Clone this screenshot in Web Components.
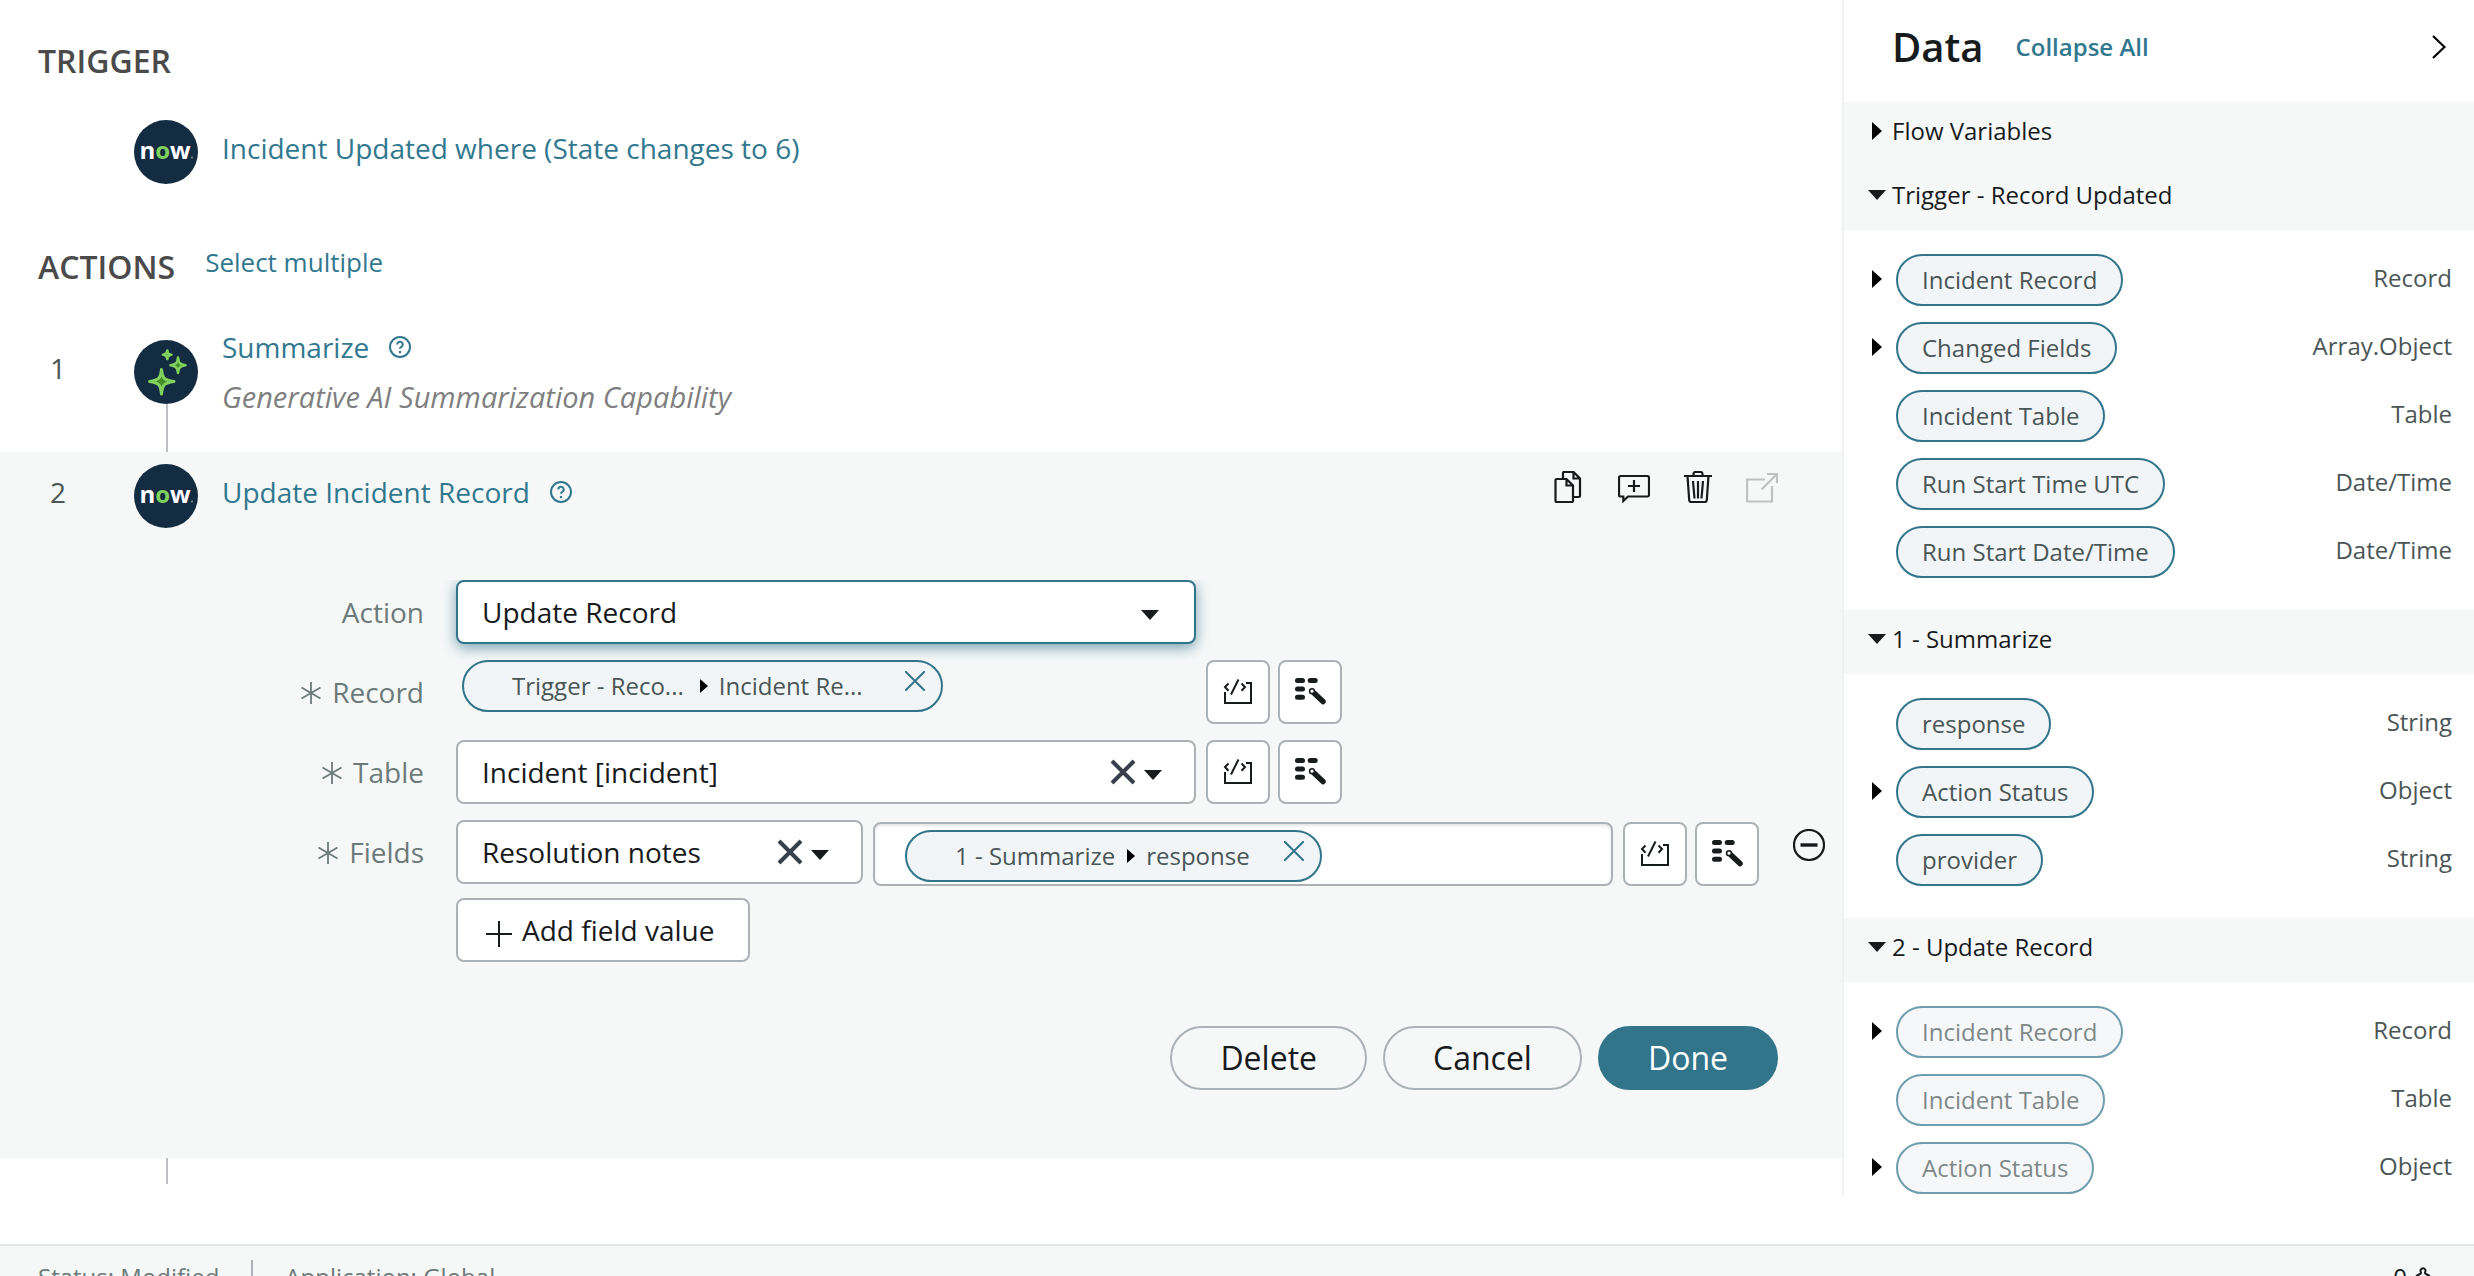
<!DOCTYPE html>
<html lang="en">
<head>
<meta charset="utf-8">
<title>Flow Designer</title>
<style>
  html { height: 100%; }
  body {
    margin: 0;
    height: 100%;
    overflow: hidden;
    background: #fff;
    color: #181b1c;
    font-family: "Open Sans", "Noto Sans", sans-serif;
    font-size: 28px;
    line-height: 38px;
    --teal: #32758b;
    --muted: #6d7a7a;
    --text-soft: #4a5656;
    --line: #abb2b5;
    --shade: #f6f8f8;
  }
</style>
</head>
<body>
<flow-designer></flow-designer>

<script>
  // Base class: opens the shadow root and fills it with styles + markup
  class FlowElement extends HTMLElement {
    connectedCallback() {
      if (this.shadowRoot) return;
      const template = document.createElement('template');
      template.innerHTML = `<style>
        *, *::before, *::after { box-sizing: border-box; }
        button { font: inherit; color: inherit; background: none; border: 0; padding: 0; margin: 0; cursor: pointer; }
        ${this.styles()}
      </style>${this.markup()}`;
      this.attachShadow({ mode: 'open' }).appendChild(template.content.cloneNode(true));
    }
  }

  // name: [width, height, viewBox, shapes]
  const icons = {
    help: [22, 22, '0 0 22 22', '<circle cx="11" cy="11" r="10" stroke-width="2"/><path d="M8.3 8.4a2.7 2.7 0 1 1 4 2.4c-.9.5-1.3.9-1.3 1.9" stroke-width="2"/><path d="M11 15v2.2" stroke-width="2.2"/>'],
    copy: [32, 32, '2 0 32 32', '<path d="M4.5 8H14.5L21 14.5V30a1 1 0 0 1-1 1H4.5a1 1 0 0 1-1-1V9a1 1 0 0 1 1-1zM14.5 8v6.5H21M11 8V2a1 1 0 0 1 1-1H21.5L28 7.5V25a1 1 0 0 1-1 1H22M21.5 1v6.5H28" stroke-width="2.2"/>'],
    comment: [32, 32, '0 0 32 32', '<path d="M2.5 5h27a1.5 1.5 0 0 1 1.5 1.5V24a1.5 1.5 0 0 1-1.5 1.5H10L5.3 30v-4.5H2.5A1.5 1.5 0 0 1 1 24V6.5A1.5 1.5 0 0 1 2.5 5zM16 9v12M10 15h12" stroke-width="2.2"/>'],
    trash: [32, 32, '0 0 32 32', '<path d="M2 5h28M11.5 5V3a2 2 0 0 1 2-2h5a2 2 0 0 1 2 2v2M5.500 5l1.700 24a2 2 0 0 0 2 2h13.6a2 2 0 0 0 2-2L26.5 5M11 10l1.5 17.5M16 10v17.5M21 10l-1.5 17.5" stroke-width="2.200"/>'],
    open: [32, 32, '0 0 32 32', '<path d="M19 8.5H1v22h25V15M21 3h10v9M31 3L15.5 18.5" stroke-width="2.2"/>'],
    code: [32, 32, '16 16 32 32', '<path d="M19 32v11h26V23h-5M25 34.5l7.5-15M22.5 23.5L19 27l3.5 3.8M35.5 23.5l3.5 3.5-3.5 3.8" stroke-width="2"/>'],
    wand: [32, 32, '16 16 32 32', '<path d="M19.5 20.5h5M32.2 20.5h5M19.5 29h5M19.5 37.3h5" stroke-width="5" stroke-linecap="round"/><path d="M36.5 33.5l8.5 8" stroke-width="5.5" stroke-linecap="round"/><circle cx="34" cy="31.2" r="2.4" fill="#fff" stroke-width="1.6"/>'],
    minus: [32, 32, '0 0 32 32', '<circle cx="16" cy="16" r="15" stroke-width="2.2"/><path d="M7.5 16h17" stroke-width="3.4"/>'],
    plus: [26, 34, '0 0 26 34', '<path d="M0 21h26M13 8v26" stroke-width="2"/>'],
    star: [22, 26, '0 0 22 26', '<path d="M11 3v22M1.5 8.5l19 11M20.5 8.5l-19 11" stroke-width="1.8"/>'],
    clear: [26, 26, '0 0 26 26', '<path d="M2 2l22 22M24 2L2 24" stroke-width="4"/>'],
    close: [20, 20, '0 0 20 20', '<path d="M0 0l20 20M20 0L0 20" stroke-width="2"/>'],
    chevron: [14, 24, '0 0 14 24', '<path d="M1 1l11.5 11L1 23" stroke-width="2.2"/>'],
    down: [18, 10, '0 0 18 10', '<path d="M0 0h18L9 10z" fill="currentColor" stroke="none"/>'],
    right: [10, 18, '0 0 10 18', '<path d="M0 0v18l10-9z" fill="currentColor" stroke="none"/>'],
    step: [8, 14, '0 0 8 14', '<path d="M0 0v14l8-7z" fill="currentColor" stroke="none"/>'],
    bell: [16, 22, '0 0 16 22', '<path d="M1 20V12q0-2 2-3l2-1q1.500-.7.800-2A2.500 2.500 0 1 1 10.200 6q-.7 1.300.8 2l2 1q2 1 2 3v8z" stroke-width="2"/>']
  };

  customElements.define('flow-icon', class extends FlowElement {
    styles() {
      return `:host { display: inline-flex; flex: none; } svg { display: block; fill: none; stroke: currentColor; }`;
    }
    markup() {
      const [w, h, box, shapes] = icons[this.getAttribute('name')];
      return `<svg width="${w}" height="${h}" viewBox="${box}" aria-hidden="true">${shapes}</svg>`;
    }
  });

  // Round badge shown beside each step
  customElements.define('step-badge', class extends FlowElement {
    styles() {
      return `
        :host { display: block; flex: none; width: 64px; height: 64px; }
        svg { display: block; }
        text { font: 700 24px "Open Sans", sans-serif; fill: #fff; }
        .green { fill: #80d15e; }
        .spark { fill: #458b28; stroke: #80d15e; stroke-linejoin: round; }
      `;
    }
    markup() {
      const logo = `<text x="31" y="39" text-anchor="middle">n<tspan class="green">o</tspan>w</text>
        <circle cx="58" cy="37.5" r="1" fill="#8794a0"/>`;
      const sparks = `
        <path class="spark" stroke-width="3" d="M27.5 29.5C28.5 38.5 30 40 40 41.5C30 43 28.5 44.5 27.5 54C26.5 44.5 25 43 15.5 41.5C25 40 26.5 38.5 27.5 29.5z"/>
        <path class="spark" stroke-width="2.6" d="M44 17.5C44.5 23 46 24.5 51.5 25.3C46 26 44.5 27.5 44 33C43.5 27.5 42 26 36.5 25.3C42 24.5 43.5 23 44 17.5z"/>
        <path class="spark green" stroke-width="2.6" d="M33.3 10.5C33.6 13.5 34.5 14.4 37.5 14.7C34.5 15 33.6 16 33.3 19C33 16 32 15 29 14.7C32 14.4 33 13.5 33.3 10.5z"/>`;
      return `<svg width="64" height="64" viewBox="0 0 64 64"><circle cx="32" cy="32" r="32" fill="#132c41"/>
        ${this.getAttribute('kind') === 'spark' ? sparks : logo}</svg>`;
    }
  });

  customElements.define('flow-step', class extends FlowElement {
    styles() {
      return `
        :host { display: block; }
        .head { display: grid; grid-template-columns: 84px 64px 1fr auto; align-items: center; padding-left: 50px; }
        .number { color: var(--text-soft); padding-bottom: 8px; }
        .main { display: flex; flex-direction: column; gap: 12px; padding-left: 24px; }
        .main.single { padding-bottom: 8px; }
        .title { display: flex; align-items: center; gap: 20px; color: #31788f; }
        .title a { color: inherit; text-decoration: none; }
        .note { font-style: italic; font-size: 29px; color: #7f7f7f; }
        .tools { align-self: start; padding: 7px 64px 0 0; }
      `;
    }
    markup() {
      const note = this.getAttribute('note');
      return `
        <div class="head">
          <span class="number">${this.getAttribute('number') || ''}</span>
          <step-badge kind="${this.getAttribute('badge') || 'now'}"></step-badge>
          <div class="main ${note ? '' : 'single'}">
            <div class="title"><a href="#">${this.getAttribute('heading')}</a>
              ${this.hasAttribute('help') ? '<flow-icon name="help"></flow-icon>' : ''}</div>
            ${note ? `<div class="note">${note}</div>` : ''}
          </div>
          <div class="tools"><slot name="tools"></slot></div>
        </div>
        <slot></slot>`;
    }
  });

  customElements.define('icon-button', class extends FlowElement {
    styles() {
      return `
        :host { display: inline-flex; flex: none; }
        button { display: flex; align-items: center; justify-content: center; }
        :host([boxed]) button { width: 64px; height: 64px; background: #fff; border: 2px solid var(--line); border-radius: 8px; }
        :host([faded]) { color: #c0c1c1; }
      `;
    }
    markup() {
      return `<button type="button" aria-label="${this.getAttribute('label')}"><flow-icon name="${this.getAttribute('icon')}"></flow-icon></button>`;
    }
  });

  // Dropped data pill with a two part path and a remove cross
  customElements.define('token-pill', class extends FlowElement {
    styles() {
      return `
        :host { display: inline-flex; flex: none; align-items: center; height: 52px; padding: 0 16px 0 48px;
          border: 2px solid var(--teal); border-radius: 26px; background: #f2f5f7;
          font-size: 24px; line-height: 34px; color: var(--text-soft); white-space: nowrap; }
        :host([trimmed]) span { padding-right: 4px; }
        :host([trimmed]) span:last-of-type { padding-right: 8px; }
        flow-icon { color: #000; margin: 0 11px 0 12px; }
        button { display: flex; color: var(--teal); margin: 0 0 10px 34px; }
        button flow-icon { color: inherit; margin: 0; }
      `;
    }
    markup() {
      return `<span>${this.getAttribute('source')}</span><flow-icon name="step"></flow-icon>
        <span>${this.getAttribute('field')}</span>
        <button type="button" aria-label="Remove"><flow-icon name="close"></flow-icon></button>`;
    }
  });

  customElements.define('update-form', class extends FlowElement {
    styles() {
      return `
        :host { display: block; padding-top: 52px; }
        .rows { display: grid; grid-template-columns: 424px minmax(0, 1fr); column-gap: 32px; row-gap: 16px; }
        .label { display: flex; justify-content: flex-end; align-items: center; gap: 10px; height: 64px; color: var(--muted); }
        .controls { display: flex; align-items: flex-start; gap: 8px; }
        .wide { flex: 0 1 740px; margin-right: 2px; min-width: 0; }
        .picker { display: grid; }
        .picker > * { grid-area: 1 / 1; }
        .half { flex: 0 0 407px; margin-right: 2px; }
        select { appearance: none; width: 100%; height: 64px; padding: 0 90px 0 24px; font: inherit; color: inherit;
          background: #fff; border: 2px solid var(--line); border-radius: 8px; outline: 0; }
        .active select { border-color: var(--teal); box-shadow: 0 4px 14px rgba(50, 117, 139, .65); clip-path: inset(0 -32px -32px -32px); }
        .ends { z-index: 1; justify-self: end; align-self: center; display: flex; align-items: center; gap: 8px; padding-right: 34px; pointer-events: none; }
        .ends flow-icon[name=down] { margin-top: 6px; }
        .active .ends { padding-right: 37px; }
        .ends button { color: #373f4a; pointer-events: auto; display: flex; }
        .slot { display: flex; padding-left: 6px; }
        .lower { flex: 1; min-width: 0; padding-top: 2px; }
        .value { display: flex; align-items: flex-start; height: 64px; padding: 6px 22px 0 30px; background: #fff;
          border: 2px solid var(--line); border-radius: 8px; box-shadow: inset 0 2px 3px rgba(0, 0, 0, .1); }
        .value input { flex: 1; min-width: 0; height: 50px; font: inherit; border: 0; outline: 0; background: none; }
        .remove { padding: 7px 0 0 26px; }
        .stack { display: flex; flex-direction: column; gap: 12px; }
        .add { align-self: flex-start; display: flex; align-items: center; gap: 10px; height: 64px; padding: 0 34px 0 28px; background: #fff;
          border: 2px solid var(--line); border-radius: 8px; }
        .footer { display: flex; justify-content: flex-end; gap: 16px; padding: 64px 64px 68px 0; font-size: 32px; line-height: 44px; }
        .footer button { height: 64px; padding: 0 48px; border: 2px solid var(--line); border-radius: 32px; }
        .footer .primary { background: var(--teal); border-color: var(--teal); color: #fff; }
      `;
    }
    markup() {
      const star = '<flow-icon name="star"></flow-icon>';
      const pair = `<icon-button boxed icon="code" label="Toggle scripting"></icon-button>
        <icon-button boxed icon="wand" label="Data pill picker"></icon-button>`;
      const clear = '<button type="button" aria-label="Clear"><flow-icon name="clear"></flow-icon></button>';
      const picker = (id, value, cls, cross) => `<div class="picker ${cls}">
          <select id="${id}"><option>${value}</option></select>
          <span class="ends">${cross ? clear : ''}<flow-icon name="down"></flow-icon></span>
        </div>`;
      return `
        <div class="rows">
          <label class="label" for="action">Action</label>
          <div class="controls">${picker('action', 'Update Record', 'wide active', false)}</div>

          <span class="label" id="record">${star}Record</span>
          <div class="controls" role="group" aria-labelledby="record">
            <div class="wide slot"><token-pill trimmed source="Trigger - Reco..." field="Incident Re..."></token-pill></div>
            ${pair}
          </div>

          <label class="label" for="table">${star}Table</label>
          <div class="controls">${picker('table', 'Incident [incident]', 'wide', true)}${pair}</div>

          <label class="label" for="fields">${star}Fields</label>
          <div class="stack">
            <div class="controls">
              ${picker('fields', 'Resolution notes', 'half', true)}
              <div class="controls lower">
                <div class="value wide"><token-pill source="1 - Summarize" field="response"></token-pill><input type="text" aria-label="Field value"></div>
                ${pair}
                <icon-button class="remove" icon="minus" label="Remove field"></icon-button>
              </div>
            </div>
            <button type="button" class="add"><flow-icon name="plus"></flow-icon>Add field value</button>
          </div>
        </div>
        <div class="footer">
          <button type="button">Delete</button>
          <button type="button">Cancel</button>
          <button type="button" class="primary">Done</button>
        </div>`;
    }
  });

  customElements.define('flow-canvas', class extends FlowElement {
    styles() {
      return `
        :host { display: block; min-width: 0; padding-bottom: 12px; }
        h2 { margin: 0; font-size: 32px; line-height: 44px; font-weight: 600; color: #4a4a4a; }
        .trigger { padding: 39px 38px 37px; }
        .actions { display: flex; align-items: flex-start; gap: 30px; padding: 61px 38px 39px; }
        .actions a { font-size: 26px; line-height: 34px; color: #31788f; text-decoration: none; }
        .link { height: 48px; margin: -12px 0 0 166px; width: 2px; background: #bdbdc2; }
        .link.tail { height: 26px; margin-top: 0; }
        .selected { background: var(--shade); padding-top: 12px; }
        .tools { display: flex; gap: 32px; }
      `;
    }
    markup() {
      return `
        <h2 class="trigger">TRIGGER</h2>
        <flow-step heading="Incident Updated where (State changes to 6)"></flow-step>
        <div class="actions"><h2>ACTIONS</h2><a href="#">Select multiple</a></div>
        <flow-step number="1" badge="spark" heading="Summarize" note="Generative AI Summarization Capability" help></flow-step>
        <div class="link"></div>
        <flow-step class="selected" number="2" heading="Update Incident Record" help>
          <div class="tools" slot="tools">
            <icon-button icon="copy" label="Duplicate"></icon-button>
            <icon-button icon="comment" label="Add comment"></icon-button>
            <icon-button icon="trash" label="Delete step"></icon-button>
            <icon-button icon="open" label="Open" faded></icon-button>
          </div>
          <update-form></update-form>
        </flow-step>
        <div class="link tail"></div>`;
    }
  });

  customElements.define('data-row', class extends FlowElement {
    styles() {
      return `
        :host { display: grid; grid-template-columns: 24px auto 1fr; align-items: center; padding: 0 22px 0 28px;
          font-size: 24px; line-height: 34px; color: var(--text-soft); }
        .toggle { display: flex; color: #000; padding-bottom: 3px; }
        .pill { height: 52px; padding: 7px 24px; border: 2px solid var(--teal); border-radius: 26px; background: #f2f5f7; white-space: nowrap; }
        :host([disabled]) .pill { opacity: .7; }
        .type { text-align: right; padding-bottom: 4px; }
      `;
    }
    markup() {
      return `
        ${this.hasAttribute('expandable') ? '<button type="button" class="toggle" aria-label="Expand"><flow-icon name="right"></flow-icon></button>' : '<span></span>'}
        <span class="pill">${this.getAttribute('name')}</span>
        <span class="type">${this.getAttribute('type')}</span>`;
    }
  });

  customElements.define('data-section', class extends FlowElement {
    styles() {
      return `
        :host { display: block; font-size: 24px; line-height: 34px; }
        .bar { display: grid; grid-template-columns: 24px auto; align-items: center; width: 100%; height: 64px;
          padding: 12px 0 18px 24px; background: var(--shade); text-align: left; justify-content: start; }
        .bar flow-icon[name=right] { color: #000; padding-left: 4px; }
        .items { display: flex; flex-direction: column; gap: 16px; padding: 24px 0 32px; }
        :host(:last-of-type) .items { padding-bottom: 2px; }
      `;
    }
    markup() {
      const open = this.hasAttribute('open');
      return `
        <button type="button" class="bar" aria-expanded="${open}"><flow-icon name="${open ? 'down' : 'right'}"></flow-icon><span>${this.getAttribute('label')}</span></button>
        ${open ? '<div class="items"><slot></slot></div>' : ''}`;
    }
  });

  customElements.define('data-panel', class extends FlowElement {
    styles() {
      return `
        :host { display: block; border-left: 2px solid #f0f1f1; }
        header { display: flex; align-items: center; gap: 32px; padding: 20px 28px 28px 48px; }
        h1 { margin: 0; font-size: 40px; line-height: 54px; font-weight: 600; }
        .collapse { font-size: 24px; line-height: 34px; font-weight: 600; color: #31788f; }
        .hide { margin-left: auto; color: #000; }
      `;
    }
    markup() {
      return `
        <header>
          <h1>Data</h1>
          <button type="button" class="collapse">Collapse All</button>
          <icon-button class="hide" icon="chevron" label="Hide panel"></icon-button>
        </header>
        <slot></slot>`;
    }
  });

  customElements.define('status-bar', class extends FlowElement {
    styles() {
      return `
        :host { display: flex; align-items: center; border-top: 2px solid #e4e6e6; background: var(--shade);
          padding: 14px 38px; font-size: 24px; line-height: 34px; color: var(--muted); }
        span + span { border-left: 2px solid var(--line); margin-left: 32px; padding-left: 32px; }
        .count { display: flex; align-items: center; gap: 8px; margin-left: auto; color: #181b1c; padding-right: 5px; }
      `;
    }
    markup() {
      return `<span>Status: Modified</span><span>Application: Global</span>
        <div class="count">0<flow-icon name="bell"></flow-icon></div>`;
    }
  });

  customElements.define('flow-designer', class extends FlowElement {
    styles() {
      return `
        :host { display: block; }
        main { display: grid; grid-template-columns: minmax(0, 1fr) 632px; margin-bottom: 48px; }
      `;
    }
    markup() {
      return `
        <main>
          <flow-canvas></flow-canvas>
          <data-panel>
            <data-section label="Flow Variables"></data-section>
            <data-section label="Trigger - Record Updated" open>
              <data-row name="Incident Record" type="Record" expandable></data-row>
              <data-row name="Changed Fields" type="Array.Object" expandable></data-row>
              <data-row name="Incident Table" type="Table"></data-row>
              <data-row name="Run Start Time UTC" type="Date/Time"></data-row>
              <data-row name="Run Start Date/Time" type="Date/Time"></data-row>
            </data-section>
            <data-section label="1 - Summarize" open>
              <data-row name="response" type="String"></data-row>
              <data-row name="Action Status" type="Object" expandable></data-row>
              <data-row name="provider" type="String"></data-row>
            </data-section>
            <data-section label="2 - Update Record" open>
              <data-row name="Incident Record" type="Record" expandable disabled></data-row>
              <data-row name="Incident Table" type="Table" disabled></data-row>
              <data-row name="Action Status" type="Object" expandable disabled></data-row>
            </data-section>
          </data-panel>
        </main>
        <status-bar></status-bar>`;
    }
  });
</script>
</body>
</html>
